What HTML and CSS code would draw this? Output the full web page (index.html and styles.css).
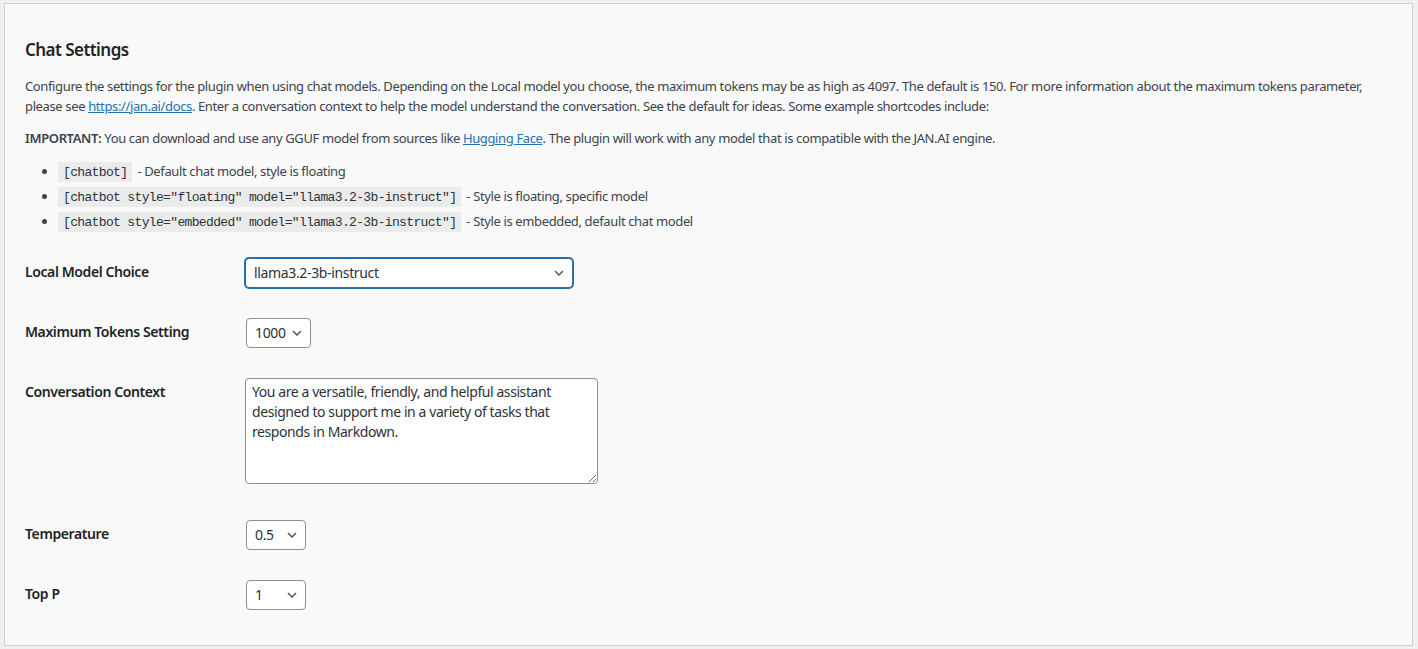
FILE: index.html
```html
<!DOCTYPE html>
<html lang="en">
<head>
    <meta charset="UTF-8">
    <meta name="viewport" content="width=device-width, initial-scale=1.0">
    <title>Chat Settings</title>
    <link rel="stylesheet" href="styles.css">
</head>
<body>
    <div class="settings-box">
        <h2>Chat Settings</h2>
        <p>Configure the settings for the plugin when using chat models. Depending on the Local model you choose, the maximum tokens may be as high as 4097. The default is 150. For more information about the maximum tokens parameter, please see <a href="#">https://jan.ai/docs</a>. Enter a conversation context to help the model understand the conversation. See the default for ideas. Some example shortcodes include:</p>
        <p><b>IMPORTANT:</b> You can download and use any GGUF model from sources like <a href="#">Hugging Face</a>. The plugin will work with any model that is compatible with the JAN.AI engine.</p>
        <ul class="shortcodes">
            <li><code>[chatbot]</code> - Default chat model, style is floating</li>
            <li><code>[chatbot style="floating" model="llama3.2-3b-instruct"]</code> - Style is floating, specific model</li>
            <li><code>[chatbot style="embedded" model="llama3.2-3b-instruct"]</code> - Style is embedded, default chat model</li>
        </ul>

        <div class="form-table">
            <div class="form-row">
                <label class="row-label" for="model">Local Model Choice</label>
                <div class="field">
                    <span class="select-wrap">
                        <select id="model" class="select-model is-focused">
                            <option>llama3.2-3b-instruct</option>
                        </select>
                        <svg class="chevron" viewBox="0 0 10 6" width="10" height="6"><path d="M1 1l4 4 4-4" fill="none" stroke="#50575e" stroke-width="1.5"/></svg>
                    </span>
                </div>
            </div>
            <div class="form-row">
                <label class="row-label" for="tokens">Maximum Tokens Setting</label>
                <div class="field">
                    <span class="select-wrap">
                        <select id="tokens" class="select-tokens">
                            <option>1000</option>
                        </select>
                        <svg class="chevron" viewBox="0 0 10 6" width="10" height="6"><path d="M1 1l4 4 4-4" fill="none" stroke="#50575e" stroke-width="1.5"/></svg>
                    </span>
                </div>
            </div>
            <div class="form-row">
                <label class="row-label" for="context">Conversation Context</label>
                <div class="field">
                    <textarea id="context" class="context-box">You are a versatile, friendly, and helpful assistant designed to support me in a variety of tasks that responds in Markdown.</textarea>
                </div>
            </div>
            <div class="form-row">
                <label class="row-label" for="temperature">Temperature</label>
                <div class="field">
                    <span class="select-wrap">
                        <select id="temperature" class="select-small">
                            <option>0.5</option>
                        </select>
                        <svg class="chevron" viewBox="0 0 10 6" width="10" height="6"><path d="M1 1l4 4 4-4" fill="none" stroke="#50575e" stroke-width="1.5"/></svg>
                    </span>
                </div>
            </div>
            <div class="form-row">
                <label class="row-label" for="top-p">Top P</label>
                <div class="field">
                    <span class="select-wrap">
                        <select id="top-p" class="select-small">
                            <option>1</option>
                        </select>
                        <svg class="chevron" viewBox="0 0 10 6" width="10" height="6"><path d="M1 1l4 4 4-4" fill="none" stroke="#50575e" stroke-width="1.5"/></svg>
                    </span>
                </div>
            </div>
        </div>
    </div>
</body>
</html>
```

FILE: styles.css
```css
body {
    font-family: 'Noto Sans', 'Open Sans', Arial, sans-serif;
    font-size: 13px;
    line-height: 1.5;
    letter-spacing: -0.37px;
    margin: 0;
    padding: 3px 5px 0 4px;
    background: #f0f0f1;
    color: #3c434a;
}
.settings-box {
    background: #f9f9f9;
    border: 1px solid #d0d0d0;
    padding: 20px;
}
h2 {
    font-size: 17px;
    font-weight: 600;
    line-height: 18px;
    letter-spacing: -0.55px;
    color: #1d2327;
    margin: 17px 0 18px;
}
p {
    margin: 0 0 13px;
}
a {
    color: #2271b1;
}
b {
    font-weight: 600;
}
.shortcodes {
    list-style: disc;
    margin: 0 0 12px;
    padding-left: 33px;
}
.shortcodes li {
    line-height: 19px;
    margin-bottom: 6px;
}
.shortcodes li:last-child {
    margin-bottom: 0;
}
code {
    font-family: 'Liberation Mono', 'DejaVu Sans Mono', monospace;
    font-size: 13px;
    line-height: 1;
    letter-spacing: -0.65px;
    background: #ebebeb;
    color: #2c3338;
    padding: 3px 5px 2px;
    margin-right: 2px;
}
.form-row {
    display: flex;
    align-items: flex-start;
}
.row-label {
    width: 220px;
    flex-shrink: 0;
    padding-top: 20px;
    font-size: 14px;
    font-weight: 600;
    line-height: 18px;
    letter-spacing: -0.4px;
    color: #1d2327;
}
.field {
    padding: 15px 0;
}
.select-wrap {
    position: relative;
    display: block;
}
select {
    appearance: none;
    -webkit-appearance: none;
    display: block;
    height: 30px;
    font-family: inherit;
    font-size: 14px;
    letter-spacing: -0.35px;
    color: #2c3338;
    background: #fff;
    border: 1px solid #8c8f94;
    border-radius: 4px;
    padding: 0 24px 0 8px;
    margin-left: 1px;
}
.select-model {
    width: 328px;
    margin-left: 0;
}
.select-tokens {
    width: 65px;
}
.select-small {
    width: 60px;
}
select.is-focused {
    border-color: #2271b1;
    box-shadow: 0 0 0 1px #2271b1;
    outline: none;
}
.chevron {
    position: absolute;
    top: 12px;
    pointer-events: none;
}
.select-model + .chevron {
    left: 309px;
}
.select-tokens + .chevron {
    left: 47px;
}
.select-small + .chevron {
    left: 42px;
}
.context-box {
    display: block;
    width: 353px;
    height: 106px;
    box-sizing: border-box;
    font-family: inherit;
    font-size: 14px;
    line-height: 20px;
    letter-spacing: -0.42px;
    color: #2c3338;
    background: #fff;
    border: 1px solid #8c8f94;
    border-radius: 4px;
    padding: 3px 6px;
    margin-bottom: 6px;
    resize: vertical;
}
```
